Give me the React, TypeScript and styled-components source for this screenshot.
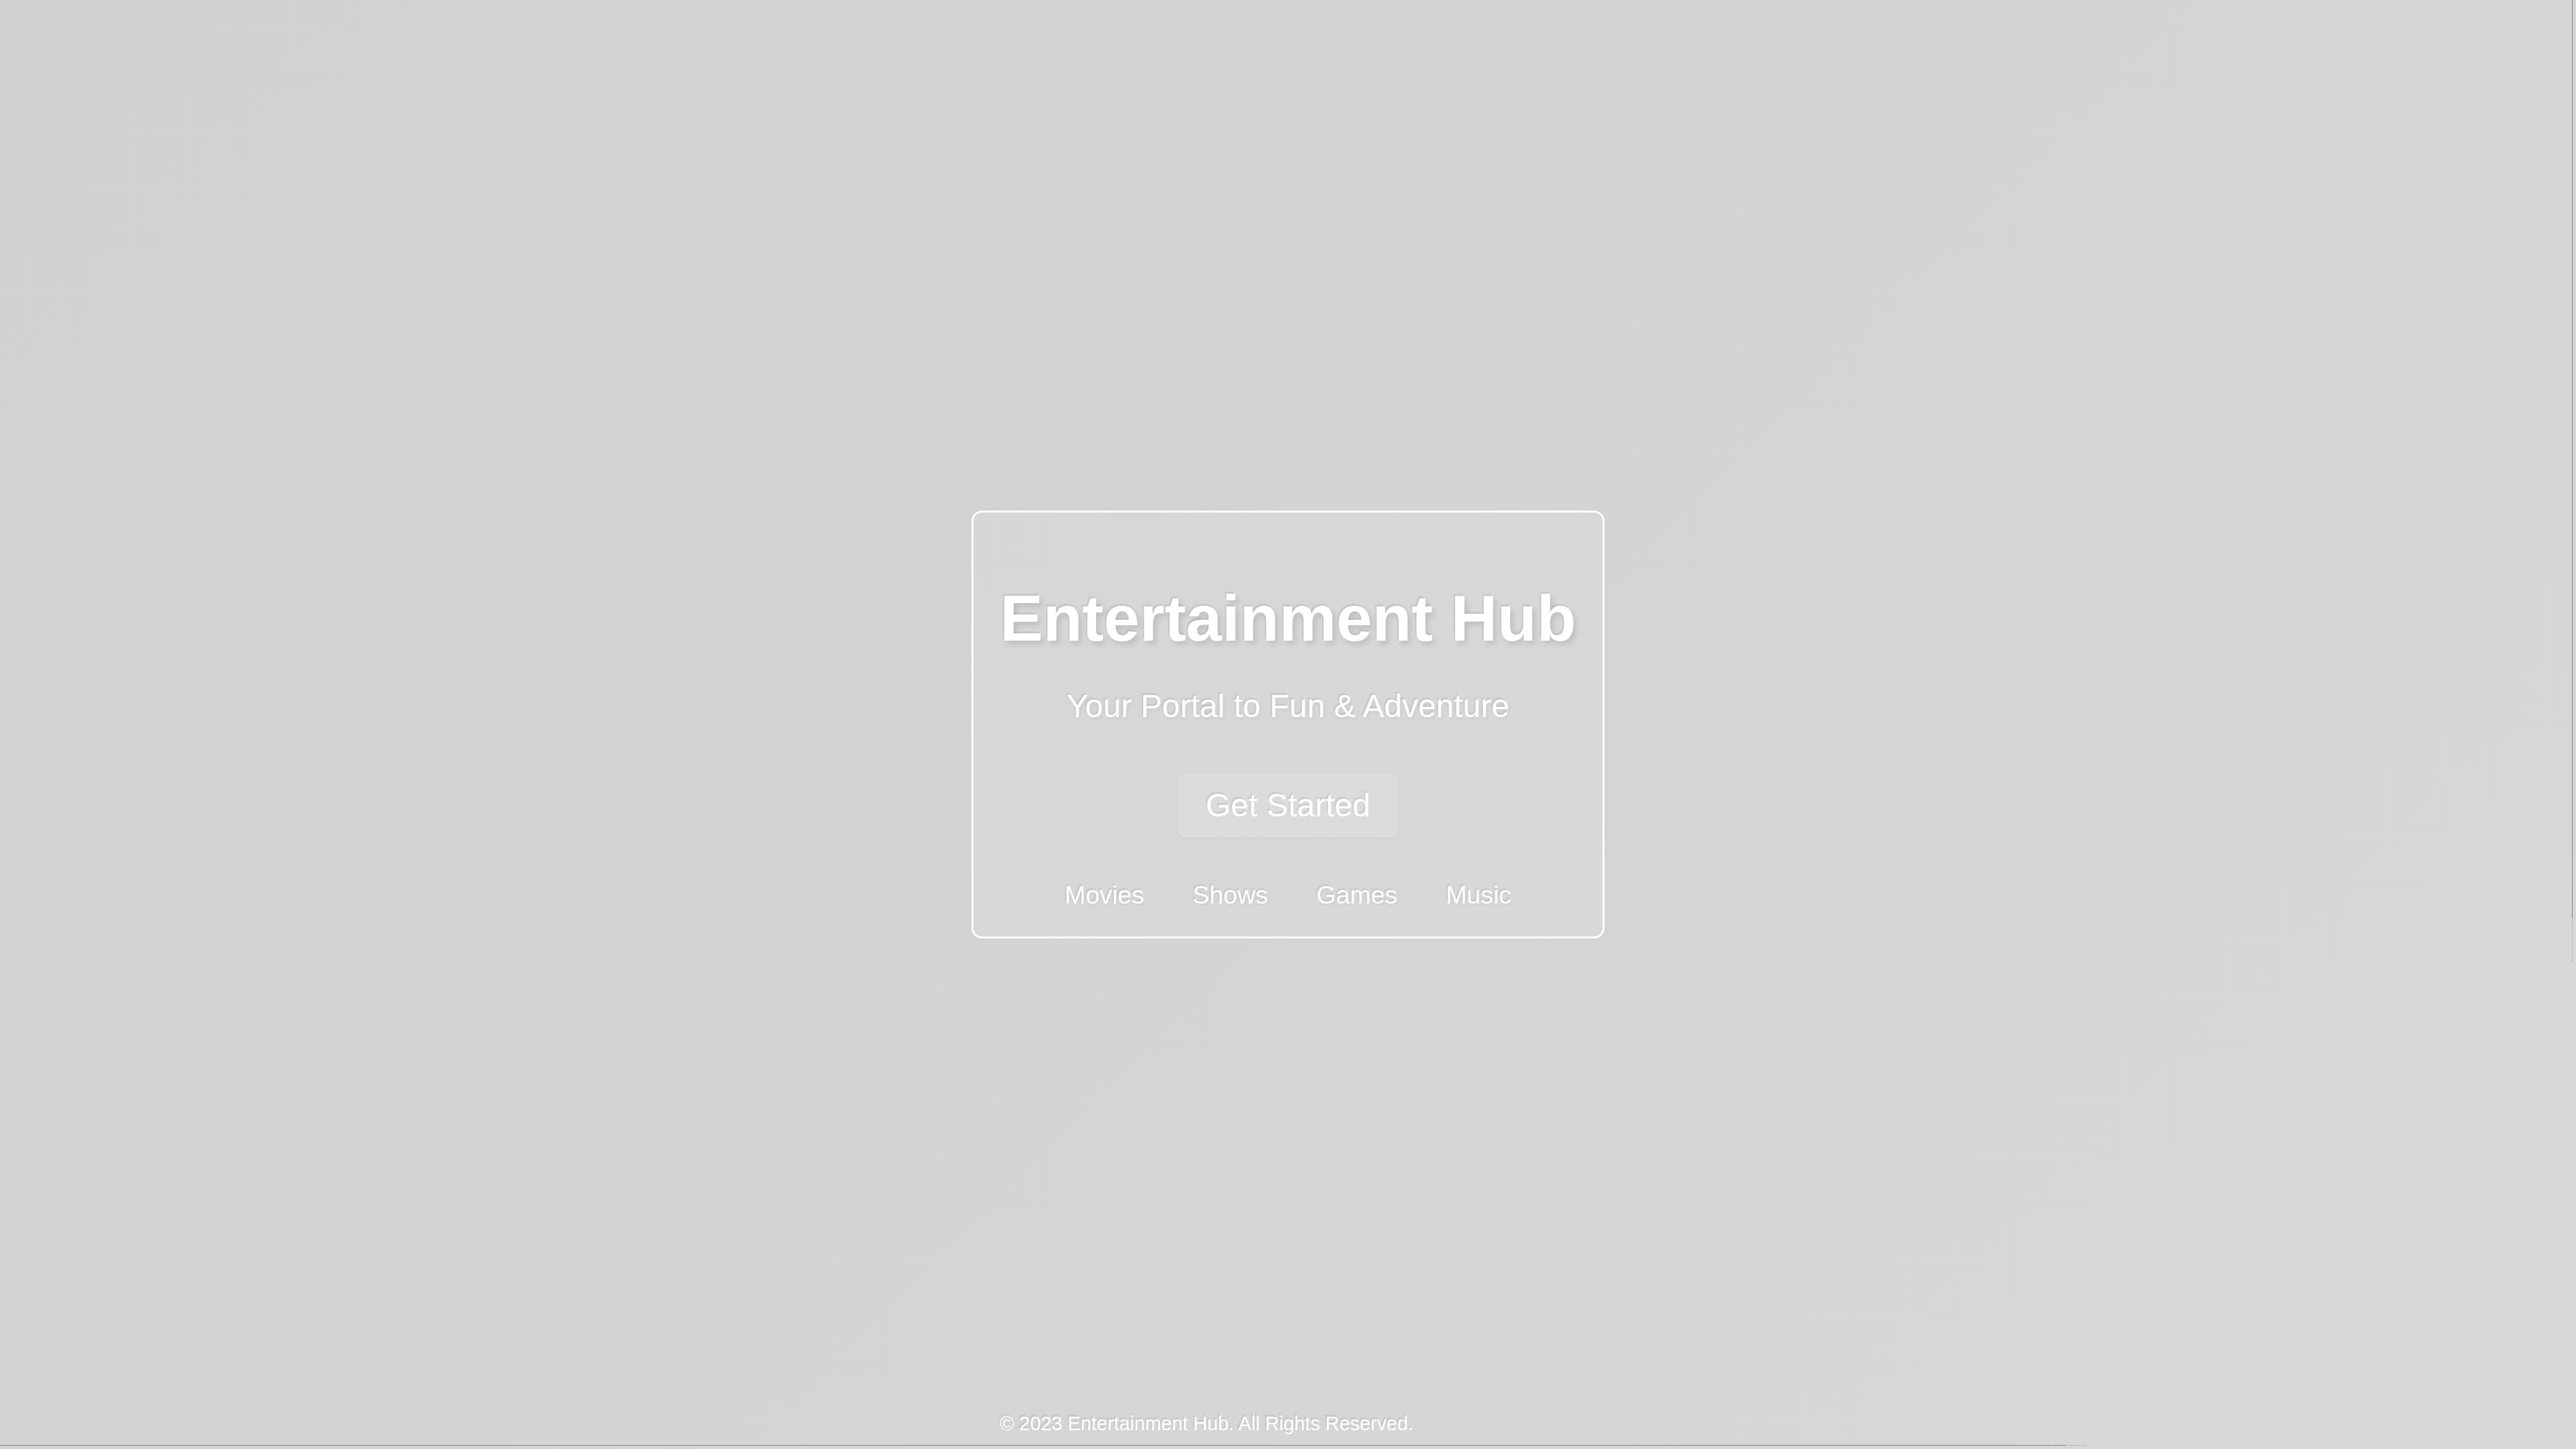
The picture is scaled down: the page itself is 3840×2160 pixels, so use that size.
import React from "react";
import styled, { createGlobalStyle } from "styled-components";

const GlobalStyle = createGlobalStyle`
  html, body {
    margin: 0;
    padding: 0;
    height: 100%;
    overflow: hidden;
  }
  body {
    font-family: "Liberation Sans", Arial, Helvetica, sans-serif;
    background: #d4d4d4;
  }
  * { box-sizing: border-box; }
`;

const ghost = "-2px -3px 1px rgba(0, 0, 0, 0.07)";

const Page = styled.div`
  min-height: 100vh;
  display: grid;
  grid-template-rows: 1fr auto 1fr;
  background: linear-gradient(135deg, #d1d1d1 0%, #d4d4d4 45%, #d8d8d8 100%);
  color: #ffffff;
  font-family: "Liberation Sans", Arial, Helvetica, sans-serif;
`;

const Card = styled.section`
  grid-row: 2;
  justify-self: center;
  display: flex;
  flex-direction: column;
  align-items: center;
  padding: 103px 40px 40px;
  border: 3px solid #ffffff;
  border-radius: 16px;
  background: rgba(255, 255, 255, 0.08);
  box-shadow: 0 0 6px rgba(0, 0, 0, 0.04);
`;

const Title = styled.h1`
  margin: 0;
  font-size: 96px;
  line-height: 1.15;
  font-weight: 700;
  white-space: nowrap;
  text-shadow: ${ghost}, 4px 5px 8px rgba(0, 0, 0, 0.12);
`;

const Subtitle = styled.p`
  margin: 48px 0 0;
  font-size: 48px;
  line-height: 1.15;
  text-shadow: ${ghost}, 2px 3px 5px rgba(0, 0, 0, 0.05);
`;

const CtaButton = styled.button`
  margin-top: 72px;
  padding: 19px 40px;
  font-family: inherit;
  font-size: 48px;
  line-height: 1.15;
  color: #ffffff;
  background: rgba(255, 255, 255, 0.1);
  border: 1px solid rgba(255, 255, 255, 0.08);
  border-radius: 12px;
  box-shadow: 0 2px 6px rgba(0, 0, 0, 0.03);
  text-shadow: ${ghost};
  cursor: pointer;
`;

const Nav = styled.nav`
  margin-top: 65px;
  display: flex;
  gap: 72px;
`;

const NavLink = styled.a`
  font-size: 37.5px;
  line-height: 1.15;
  color: #ffffff;
  text-decoration: none;
  text-shadow: ${ghost}, 1px 2px 3px rgba(0, 0, 0, 0.05);
`;

const Footer = styled.footer`
  grid-row: 3;
  align-self: end;
  padding: 0 243px 21px 0;
  text-align: center;
  font-size: 28.8px;
  line-height: 1.15;
  color: #ffffff;
  text-shadow: ${ghost};
`;

const ScrollTrackV = styled.div`
  position: fixed;
  top: 0;
  left: 3834px;
  width: 1px;
  height: 1433px;
  background: linear-gradient(
    to bottom,
    #808080 0,
    #808080 1368px,
    transparent 1368px
  ),
  repeating-linear-gradient(
    to bottom,
    #808080 0,
    #808080 1px,
    transparent 1px,
    transparent 3px
  );
`;

const ScrollTrackH = styled.div`
  position: fixed;
  left: 0;
  top: 2154px;
  height: 1px;
  width: 3111px;
  background: linear-gradient(
    to right,
    #808080 0,
    #808080 3059px,
    transparent 3059px,
    transparent 3060px,
    #808080 3060px,
    #808080 3079px,
    transparent 3079px
  ),
  repeating-linear-gradient(
    to right,
    #808080 0,
    #808080 1px,
    transparent 1px,
    transparent 3px
  );
`;

const links = ["Movies", "Shows", "Games", "Music"];

export default function App() {
  return (
    <>
      <GlobalStyle />
      <Page>
        <Card>
          <Title>Entertainment Hub</Title>
          <Subtitle>Your Portal to Fun &amp; Adventure</Subtitle>
          <CtaButton>Get Started</CtaButton>
          <Nav>
            {links.map((l) => (
              <NavLink key={l} href="#">
                {l}
              </NavLink>
            ))}
          </Nav>
        </Card>
        <Footer>© 2023 Entertainment Hub. All Rights Reserved.</Footer>
      </Page>
      <ScrollTrackV />
      <ScrollTrackH />
    </>
  );
}
